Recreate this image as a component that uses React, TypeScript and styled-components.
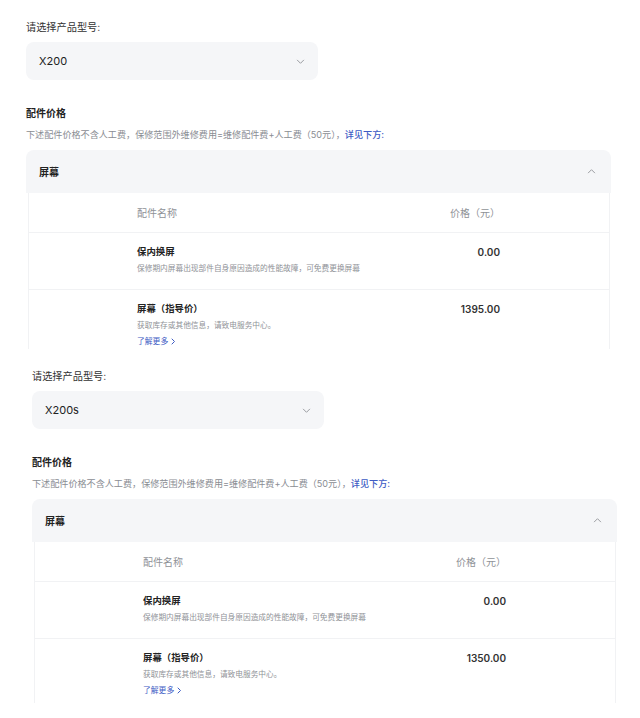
import React from 'react';
import styled, { createGlobalStyle } from 'styled-components';

const GlobalStyle = createGlobalStyle`
  html, body {
    margin: 0;
    padding: 0;
    background: #ffffff;
  }
  body {
    font-family: "Inter", "Noto Sans CJK SC", "Noto Sans", sans-serif;
    color: #222;
    -webkit-font-smoothing: antialiased;
  }
`;

const Page = styled.div`
  width: 640px;
  height: 718px;
  overflow: hidden;
  background: #fff;
`;

const Shot = styled.section<{ $inset: number; $height: number }>`
  height: ${(p) => p.$height}px;
  overflow: hidden;
  box-sizing: border-box;
  padding: 19px 0 0 ${(p) => p.$inset}px;
`;

const Label = styled.div`
  font-size: 10.2px;
  line-height: 16px;
  color: #333;
`;

const Select = styled.div`
  margin-top: 7px;
  width: 292px;
  height: 38px;
  box-sizing: border-box;
  padding: 0 13px;
  border-radius: 8px;
  background: #f5f6f8;
  display: flex;
  align-items: center;
  justify-content: space-between;
  font-size: 11px;
  color: #222;
`;

const Title = styled.div`
  margin-top: 25px;
  font-size: 10px;
  line-height: 16px;
  font-weight: 700;
  color: #222;
`;

const Note = styled.div`
  margin-top: 8px;
  font-size: 9.1px;
  line-height: 12px;
  color: #8a8d93;
  white-space: nowrap;
`;

const NoteLink = styled.span`
  color: #3d5bc4;
  font-weight: 500;
`;

const Panel = styled.div`
  margin-top: 9px;
  width: 585px;
`;

const PanelHead = styled.div`
  height: 43px;
  box-sizing: border-box;
  padding: 0 15px 0 13px;
  border-radius: 8px 8px 0 0;
  background: #f5f6f8;
  display: flex;
  align-items: center;
  justify-content: space-between;
  font-size: 10px;
  font-weight: 700;
  color: #222;
`;

const PanelBody = styled.div`
  margin: 0 1px 0 2px;
  border-left: 1px solid #f1f2f4;
  border-right: 1px solid #f1f2f4;
`;

const Row = styled.div<{ $head?: boolean }>`
  display: grid;
  grid-template-columns: 108px 233px 130px 1fr;
  box-sizing: border-box;
  border-bottom: 1px solid #f1f2f4;
  ${(p) =>
    p.$head
      ? `height: 40px; align-items: center;`
      : `padding: 12px 0 15px; align-items: start;`}
`;

const HeadCell = styled.div<{ $right?: boolean }>`
  font-size: 10px;
  color: #8f9297;
  text-align: ${(p) => (p.$right ? 'right' : 'left')};
`;

const NameCell = styled.div`
  grid-column: 2;
  white-space: nowrap;
`;

const ItemName = styled.div`
  font-size: 9.4px;
  line-height: 14px;
  font-weight: 700;
  color: #222;
`;

const ItemDesc = styled.div`
  margin-top: 4px;
  font-size: 7.7px;
  line-height: 11px;
  color: #8f9297;
`;

const MoreLink = styled.div`
  margin-top: 4px;
  font-size: 7.8px;
  line-height: 12px;
  color: #3d5bc4;
  display: flex;
  align-items: center;
  gap: 3px;
`;

const Price = styled.div`
  grid-column: 3;
  text-align: right;
  font-size: 10px;
  line-height: 14px;
  font-weight: 600;
  color: #333;
`;

const Chevron = ({ up, size = 9, color = '#9a9ca1' }: { up?: boolean; size?: number; color?: string }) => (
  <svg width={size} height={size} viewBox="0 0 10 10" fill="none">
    <path
      d={up ? 'M1.5 6.5 5 3l3.5 3.5' : 'M1.5 3.5 5 7l3.5-3.5'}
      stroke={color}
      strokeWidth="1.1"
      strokeLinecap="round"
      strokeLinejoin="round"
    />
  </svg>
);

const SmallArrow = () => (
  <svg width="5" height="7" viewBox="0 0 5 7" fill="none">
    <path d="M1 1l2.5 2.5L1 6" stroke="#3d5bc4" strokeWidth="1" strokeLinecap="round" strokeLinejoin="round" />
  </svg>
);

interface ShotProps {
  model: string;
  screenPrice: string;
  inset: number;
  height: number;
}

const PriceShot: React.FC<ShotProps> = ({ model, screenPrice, inset, height }) => (
  <Shot $inset={inset} $height={height}>
    <Label>请选择产品型号:</Label>
    <Select>
      <span>{model}</span>
      <Chevron />
    </Select>

    <Title>配件价格</Title>
    <Note>
      下述配件价格不含人工费，保修范围外维修费用=维修配件费+人工费（50元），<NoteLink>详见下方:</NoteLink>
    </Note>

    <Panel>
      <PanelHead>
        <span>屏幕</span>
        <Chevron up />
      </PanelHead>
      <PanelBody>
        <Row $head>
          <span />
          <HeadCell>配件名称</HeadCell>
          <HeadCell $right>价格（元）</HeadCell>
        </Row>
        <Row>
          <NameCell>
            <ItemName>保内换屏</ItemName>
            <ItemDesc>保修期内屏幕出现部件自身原因造成的性能故障，可免费更换屏幕</ItemDesc>
          </NameCell>
          <Price>0.00</Price>
        </Row>
        <Row>
          <NameCell>
            <ItemName>屏幕（指导价）</ItemName>
            <ItemDesc>获取库存或其他信息，请致电服务中心。</ItemDesc>
            <MoreLink>
              了解更多 <SmallArrow />
            </MoreLink>
          </NameCell>
          <Price>{screenPrice}</Price>
        </Row>
      </PanelBody>
    </Panel>
  </Shot>
);

export default function App() {
  return (
    <Page>
      <GlobalStyle />
      <PriceShot model="X200" screenPrice="1395.00" inset={26} height={349} />
      <PriceShot model="X200s" screenPrice="1350.00" inset={32} height={354} />
    </Page>
  );
}
